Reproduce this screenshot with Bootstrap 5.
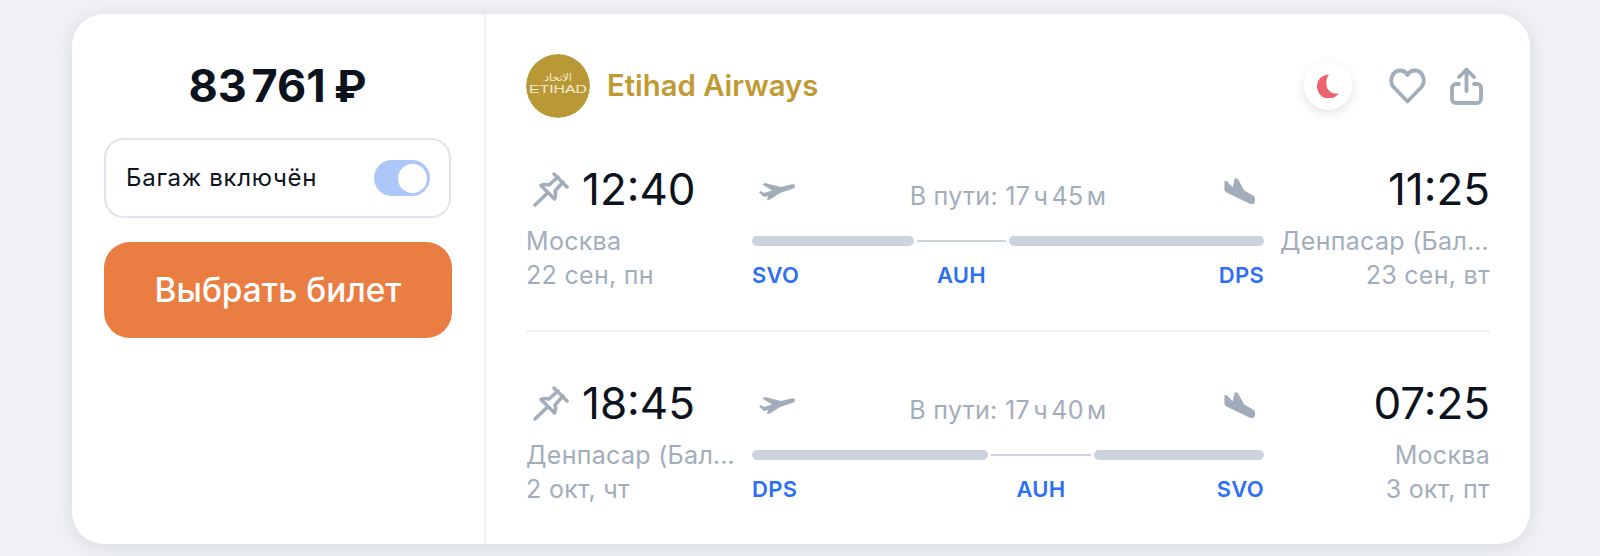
<!DOCTYPE html>
<html lang="ru"><head><meta charset="utf-8">
<link href="https://cdn.jsdelivr.net/npm/bootstrap@5.3.0/dist/css/bootstrap.min.css" rel="stylesheet">
<style>
html,body{height:556px;overflow:hidden}
body{background:#eff1f5;font-family:Inter,"Liberation Sans",sans-serif;color:#0c131d}
.tkt{width:1458px;height:530px;margin:14px 0 0 72px;background:#fff;border-radius:32px;box-shadow:0 3px 18px rgba(70,80,100,.14)}
.buy{width:414px;padding:42px 33px 0 32px;border-right:2px solid #eff1f5;flex:none}
.cost{font-size:45px;font-weight:700;line-height:60px;word-spacing:-6px}
.rub{font-family:Roboto,Inter,sans-serif;margin-left:4px}
.bag{height:80px;border:2px solid #e2e4ec;border-radius:20px;padding:0 19px 0 20px;margin-top:21px;font-size:24px;letter-spacing:.7px}
.swt{width:56px;height:36px;background:#adc7fb;border-radius:18px;padding:3.5px}
.swt i{display:block;width:29px;height:29px;background:#fff;border-radius:50%;margin-left:20px}
.pick{height:96px;width:348px;margin-top:24px;background:#ea7d42;border-radius:26px;color:#fff;font-size:33.4px;font-weight:500;border:0}
.info{padding:40px 40px 0 40px}
.logo{width:64px;height:64px;border-radius:50%;flex:none}
.airline{font-size:29.3px;font-weight:600;color:#c09a33;margin-left:17px}
.moon{width:48px;height:48px;border-radius:50%;box-shadow:0 3px 10px rgba(90,105,130,.2);margin-right:37px}
.acts{margin-right:7px}
.leg{display:grid;grid-template-columns:226px 1fr 226px}
.lega{margin-top:37px}
.tm{font-size:44px;line-height:69px;color:#0c131d}
.pin{margin:0 13px 0 7px}
.gr{font-size:25px;line-height:34px;color:#a2adbc;letter-spacing:.3px}
.clip{white-space:nowrap;overflow:hidden;text-overflow:ellipsis;max-width:210px}
.dur{font-size:25px;color:#a2adbc;line-height:32px;padding-top:10px;letter-spacing:.3px;margin-right:2px}
.hrs{word-spacing:-4px}
.top{height:72px;padding:0 8px 0 7px}
.bars{height:10px;margin-top:9px;gap:3px}
.bar{height:10px;background:#ccd3de;border-radius:5px}
.wire{height:2px;background:#ccd3de;flex:1}
.port{font-size:22px;font-weight:600;color:#2d6ff5;line-height:24px;letter-spacing:.3px;margin-top:17px}
.port span:nth-child(2){flex:1;text-align:center}
.port span:nth-child(3){text-align:right}
.sep{height:2px;background:#eff1f5;margin:38px 0 37px}
</style></head><body>
<main class="tkt d-flex">
<section class="buy">
<div class="cost text-center">83 761<span class="rub"> ₽</span></div>
<div class="bag d-flex align-items-center justify-content-between"><span>Багаж включён</span><span class="swt"><i></i></span></div>
<button class="pick d-block" type="button">Выбрать билет</button>
</section>
<section class="info flex-grow-1">
<div class="d-flex align-items-center">
<svg class="logo" viewBox="0 0 64 64"><circle cx="32" cy="32" r="32" fill="#b99836"/><text x="32" y="27" text-anchor="middle" font-size="11" fill="#f4ecd2" font-family="DejaVu Sans" direction="rtl">الاتحاد</text><text x="32" y="39" text-anchor="middle" font-size="10" fill="#f4ecd2" font-family="Liberation Sans" textLength="58" lengthAdjust="spacingAndGlyphs">ETIHAD</text></svg>
<span class="airline">Etihad Airways</span>
<span class="moon ms-auto d-flex align-items-center justify-content-center"><svg width="24" height="24" viewBox="0 0 24 24"><path d="M13 .5A12 12 0 1 0 23 19C17 21 11 17 10.500 11 10 7 11 3 13 .5z" fill="#ec6470"/></svg></span>
<span class="acts d-flex align-items-center gap-4"><svg width="37" height="36" viewBox="0 0 37 36" fill="none" stroke="#a2adbc" stroke-width="3.8" stroke-linejoin="round"><path d="M18.500 33.500 4.500 19C-.5 13 3.500 2.500 11 2.500c3.500 0 6 1.800 7.500 4.500 1.500-2.700 4-4.500 7.500-4.500 7.500 0 11.500 10.500 6.500 16.500z"/></svg><svg width="33" height="38" viewBox="0 0 33 38" fill="none" stroke="#a2adbc" stroke-width="3.800" stroke-linecap="round" stroke-linejoin="round"><path d="M16.500 24V2.500M9 10l7.500-7.500L24 10M9 17H6a4 4 0 0 0-4 4v11a4 4 0 0 0 4 4h21a4 4 0 0 0 4-4V21a4 4 0 0 0-4-4h-3"/></svg></span>
</div>
<div class="leg lega">
<div><div class="tm d-flex align-items-center"><svg class="pin" width="36" height="35" viewBox="0 0 36 35" fill="none" stroke="#a2adbc" stroke-width="3.500" stroke-linejoin="round" stroke-linecap="round"><path d="M21 2 34 15M25 5l-9 8c-3-1-6-.5-8 .5l13.500 13.500c1-2 1.500-5 .5-8l8-9M14.500 21 2 33"/></svg><span>12:40</span></div><div class="gr">Москва</div><div class="gr">22 сен, пн</div></div>
<div><div class="top d-flex justify-content-between align-items-center"><svg width="36" height="17" viewBox="0 0 36 17"><path d="M36 3C36 1 33 1 30 2L22 4 6 0 3.500 1.500 13 7.500 5 10 2 8 0 9.500 5 14 9 13 8 17l3-.5L21 10l12-4c2-.5 3-1.500 3-3z" fill="#a2adbc"/></svg><span class="dur">В пути: <span class="hrs">17 ч 45 м</span></span><svg width="33" height="27" viewBox="0 0 31 26"><path d="M1 3h2l6 6L11 0l3 1 6 11 9 5c2 1 2 6 0 8h-3L3 14l-2-2z" fill="#a2adbc"/></svg></div>
<div class="bars d-flex align-items-center"><i class="bar" style="width:162px"></i><i class="wire"></i><i class="bar" style="width:255px"></i></div>
<div class="port d-flex"><span style="width:162px">SVO</span><span>AUH</span><span style="width:255px">DPS</span></div></div>
<div class="d-flex flex-column align-items-end"><div class="tm">11:25</div><div class="gr clip">Денпасар (Бали)</div><div class="gr">23 сен, вт</div></div>
</div>
<div class="sep"></div>
<div class="leg">
<div><div class="tm d-flex align-items-center"><svg class="pin" width="36" height="35" viewBox="0 0 36 35" fill="none" stroke="#a2adbc" stroke-width="3.500" stroke-linejoin="round" stroke-linecap="round"><path d="M21 2 34 15M25 5l-9 8c-3-1-6-.5-8 .5l13.500 13.500c1-2 1.500-5 .5-8l8-9M14.500 21 2 33"/></svg><span>18:45</span></div><div class="gr clip">Денпасар (Бали)</div><div class="gr">2 окт, чт</div></div>
<div><div class="top d-flex justify-content-between align-items-center"><svg width="36" height="17" viewBox="0 0 36 17"><path d="M36 3C36 1 33 1 30 2L22 4 6 0 3.500 1.500 13 7.500 5 10 2 8 0 9.500 5 14 9 13 8 17l3-.5L21 10l12-4c2-.5 3-1.500 3-3z" fill="#a2adbc"/></svg><span class="dur">В пути: <span class="hrs">17 ч 40 м</span></span><svg width="33" height="27" viewBox="0 0 31 26"><path d="M1 3h2l6 6L11 0l3 1 6 11 9 5c2 1 2 6 0 8h-3L3 14l-2-2z" fill="#a2adbc"/></svg></div>
<div class="bars d-flex align-items-center"><i class="bar" style="width:236px"></i><i class="wire"></i><i class="bar" style="width:170px"></i></div>
<div class="port d-flex"><span style="width:236px">DPS</span><span>AUH</span><span style="width:170px">SVO</span></div></div>
<div class="d-flex flex-column align-items-end"><div class="tm">07:25</div><div class="gr">Москва</div><div class="gr">3 окт, пт</div></div>
</div>
</section>
</main>
<script src="https://cdn.jsdelivr.net/npm/bootstrap@5.3.0/dist/js/bootstrap.bundle.min.js"></script>
</body></html>
